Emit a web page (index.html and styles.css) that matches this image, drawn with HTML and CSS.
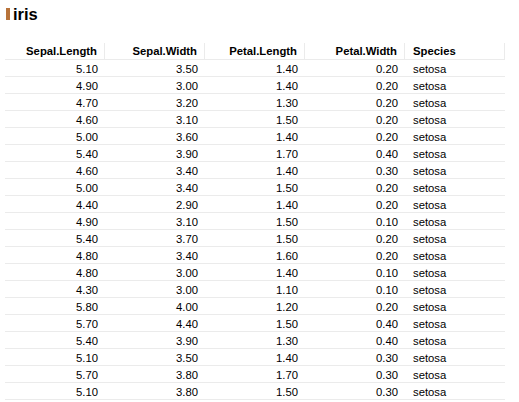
FILE: index.html
```html
<!DOCTYPE html>
<html>
<head>
<meta charset="utf-8">
<link rel="stylesheet" href="styles.css">
</head>
<body>
<h1 class="title"><span class="bar"></span><span>iris</span></h1>
<table class="grid">
<thead>
<tr><th>Sepal.Length</th><th>Sepal.Width</th><th>Petal.Length</th><th>Petal.Width</th><th class="txt">Species</th></tr>
</thead>
<tbody>
<tr><td>5.10</td><td>3.50</td><td>1.40</td><td>0.20</td><td class="txt">setosa</td></tr>
<tr><td>4.90</td><td>3.00</td><td>1.40</td><td>0.20</td><td class="txt">setosa</td></tr>
<tr><td>4.70</td><td>3.20</td><td>1.30</td><td>0.20</td><td class="txt">setosa</td></tr>
<tr><td>4.60</td><td>3.10</td><td>1.50</td><td>0.20</td><td class="txt">setosa</td></tr>
<tr><td>5.00</td><td>3.60</td><td>1.40</td><td>0.20</td><td class="txt">setosa</td></tr>
<tr><td>5.40</td><td>3.90</td><td>1.70</td><td>0.40</td><td class="txt">setosa</td></tr>
<tr><td>4.60</td><td>3.40</td><td>1.40</td><td>0.30</td><td class="txt">setosa</td></tr>
<tr><td>5.00</td><td>3.40</td><td>1.50</td><td>0.20</td><td class="txt">setosa</td></tr>
<tr><td>4.40</td><td>2.90</td><td>1.40</td><td>0.20</td><td class="txt">setosa</td></tr>
<tr><td>4.90</td><td>3.10</td><td>1.50</td><td>0.10</td><td class="txt">setosa</td></tr>
<tr><td>5.40</td><td>3.70</td><td>1.50</td><td>0.20</td><td class="txt">setosa</td></tr>
<tr><td>4.80</td><td>3.40</td><td>1.60</td><td>0.20</td><td class="txt">setosa</td></tr>
<tr><td>4.80</td><td>3.00</td><td>1.40</td><td>0.10</td><td class="txt">setosa</td></tr>
<tr><td>4.30</td><td>3.00</td><td>1.10</td><td>0.10</td><td class="txt">setosa</td></tr>
<tr><td>5.80</td><td>4.00</td><td>1.20</td><td>0.20</td><td class="txt">setosa</td></tr>
<tr><td>5.70</td><td>4.40</td><td>1.50</td><td>0.40</td><td class="txt">setosa</td></tr>
<tr><td>5.40</td><td>3.90</td><td>1.30</td><td>0.40</td><td class="txt">setosa</td></tr>
<tr><td>5.10</td><td>3.50</td><td>1.40</td><td>0.30</td><td class="txt">setosa</td></tr>
<tr><td>5.70</td><td>3.80</td><td>1.70</td><td>0.30</td><td class="txt">setosa</td></tr>
<tr><td>5.10</td><td>3.80</td><td>1.50</td><td>0.30</td><td class="txt">setosa</td></tr>
</tbody>
</table>
</body>
</html>
```
FILE: styles.css
```css
html, body {
  margin: 0;
  background: #fff;
}
body {
  padding: 0 5px;
  font-family: "Liberation Sans", Arial, sans-serif;
  color: #000;
}
.title {
  display: flex;
  align-items: center;
  gap: 3px;
  margin: 6px 0 0 1px;
  font-size: 16.5px;
  line-height: 16px;
  font-weight: bold;
  color: #000;
}
.bar {
  display: block;
  width: 4px;
  height: 12px;
  background: #b8733a;
}
.grid {
  margin-top: 21px;
  width: 500px;
  table-layout: fixed;
  border-collapse: separate;
  border-spacing: 0;
  font-size: 11.3px;
}
.grid th, .grid td {
  box-sizing: border-box;
  width: 100px;
  text-align: right;
  padding: 0 7px 0 8px;
  white-space: nowrap;
  border-bottom: 1px solid #ebebeb;
}
.grid th {
  height: 17px;
  line-height: 16px;
  font-weight: bold;
  color: #000;
  border-right: 1px solid #ebebeb;
  vertical-align: top;
}
.grid td {
  height: 17px;
  line-height: 13px;
  padding-top: 3px;
  vertical-align: top;
  color: #000;
}
.grid .txt {
  text-align: left;
}
```
